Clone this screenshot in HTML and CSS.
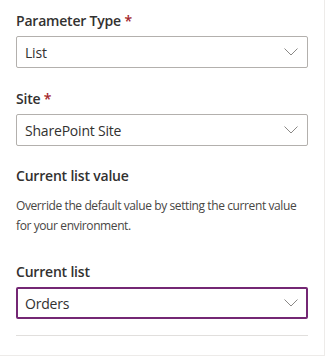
FILE: index.html
```html
<!DOCTYPE html>
<html>
<head>
  <meta charset="utf-8" />
  <title>Parameter</title>
  <link rel="stylesheet" href="styles.css">
</head>
<body>
  <div class="panel">
    <!-- Parameter Type -->
    <div class="field">
      <label class="field-label">Parameter Type <span class="req">*</span></label>
      <div class="dropdown">
        <span class="dropdown-value">List</span>
        <svg class="chevron" width="14" height="8" viewBox="0 0 14 8"><path d="M0.5 0.5 L7 7 L13.5 0.5" fill="none" stroke="#8a8886" stroke-width="1"/></svg>
      </div>
    </div>

    <!-- Site -->
    <div class="field">
      <label class="field-label">Site <span class="req">*</span></label>
      <div class="dropdown">
        <span class="dropdown-value">SharePoint Site</span>
        <svg class="chevron" width="14" height="8" viewBox="0 0 14 8"><path d="M0.5 0.5 L7 7 L13.5 0.5" fill="none" stroke="#8a8886" stroke-width="1"/></svg>
      </div>
    </div>

    <div class="section">
      <h3 class="section-title">Current list value</h3>
      <p class="section-desc">Override the default value by setting the current value for your environment.</p>
    </div>

    <!-- Current list (focused) -->
    <div class="field">
      <label class="field-label">Current list</label>
      <div class="dropdown focused">
        <span class="dropdown-value">Orders</span>
        <svg class="chevron" width="14" height="8" viewBox="0 0 14 8"><path d="M0.5 0.5 L7 7 L13.5 0.5" fill="none" stroke="#8a8886" stroke-width="1"/></svg>
      </div>
    </div>

    <hr class="divider" />
  </div>
</body>
</html>
```

FILE: styles.css
```css
html, body {
  margin: 0;
  padding: 0;
  background: #fff;
  font-family: "Open Sans", "Noto Sans", sans-serif;
  color: #323130;
}

/* Panel mit rechter und unterer Kante */
.panel {
  width: 325px;
  height: 356px;
  box-sizing: border-box;
  padding: 6px 16px 0 16px;
  border-right: 1px solid #edebe9;
  border-bottom: 1px solid #edebe9;
  display: flex;
  flex-direction: column;
}

.field {
  display: flex;
  flex-direction: column;
  margin-bottom: 16px;
}

.field-label {
  font-size: 14px;
  font-weight: 600;
  line-height: 20px;
  padding: 5px 0;
  letter-spacing: -0.2px;
}

.req {
  color: #a4262c;
}

.dropdown {
  height: 32px;
  box-sizing: border-box;
  border: 1px solid #b3b0ad;
  border-radius: 2px;
  display: flex;
  align-items: center;
  justify-content: space-between;
  padding: 0 9px 0 8px;
  font-size: 14px;
  letter-spacing: -0.2px;
}

.dropdown.focused {
  border: 2px solid #742774;
  padding: 0 8px 0 7px;
}

.chevron {
  display: block;
}

.section {
  margin-top: 4px;
}

.section-title {
  margin: 0;
  font-size: 14px;
  font-weight: 600;
  line-height: 20px;
  letter-spacing: -0.2px;
}

.section-desc {
  margin: 10px 0 21px;
  font-size: 12px;
  line-height: 20px;
  color: #484644;
  letter-spacing: -0.4px;
}

.divider {
  margin: 0;
  border: none;
  border-top: 1px solid #e1dfdd;
}
```
